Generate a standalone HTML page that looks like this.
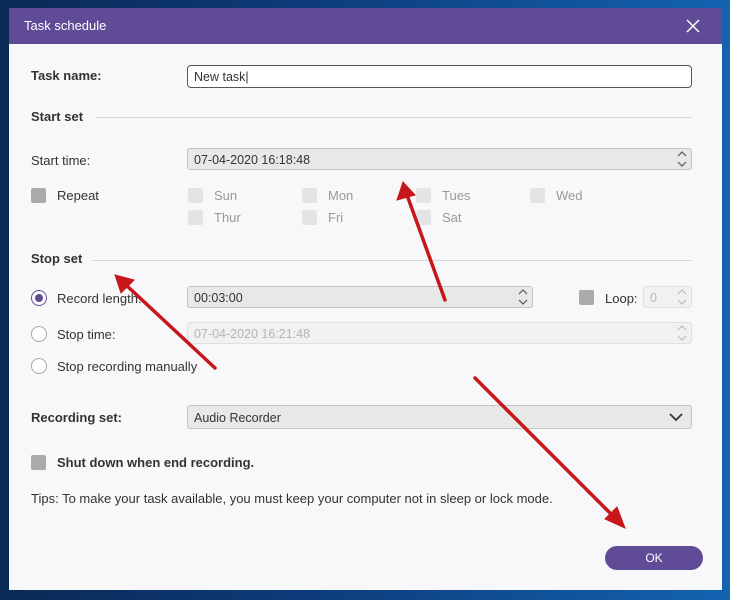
<!DOCTYPE html>
<html><head><style>
body{margin:0;width:730px;height:600px;overflow:hidden;background:linear-gradient(90deg,#0a2a55,#0d3a78 40%,#1363b0 100%);font-family:"Liberation Sans",sans-serif;position:relative}
.a{position:absolute}
#dlg{left:9px;top:8px;width:713px;height:582px;background:#f8f8fa}
#tb{left:9px;top:8px;width:713px;height:36px;background:#5f4b96;color:#fff;font-size:13px;line-height:36px}
.t{font-size:13px;color:#333}
.b{font-weight:bold}
.box{border:1px solid #c4c4c4;background:#e8e8e8;border-radius:3px;height:22px;font-size:12.5px;line-height:22px;padding-left:6px;color:#333;box-sizing:border-box}
.dis{background:#f1f1f3;color:#b5b5b5;border-color:#e0e0e0}
.cb{width:15px;height:15px;background:#aaa;border-radius:2px}
.cbl{width:15px;height:15px;background:#e4e4e6;border-radius:2px}
.g{color:#999;font-size:13px}
.line{height:1px;background:#d8d8d8}
.r{width:14px;height:14px;border:1px solid #aaa;border-radius:50%;background:#fff}
</style></head><body>
<div id="dlg" class="a"></div>
<div id="tb" class="a"><span style="margin-left:15px">Task schedule</span>
<svg class="a" style="left:677px;top:11px" width="14" height="14"><path d="M1 1L13 13M13 1L1 13" stroke="#fff" stroke-width="1.5"/></svg></div>

<svg width="0" height="0" style="position:absolute"><defs><g id="sp"><path d="M1 5L5 1L9 5M1 11L5 15L9 11" fill="none" stroke-width="1.2"/></g></defs></svg>

<div class="a t b" style="left:31px;top:68px">Task name:</div>
<div class="a box" style="left:187px;top:65px;width:505px;height:23px;background:#fff;border-color:#555;border-radius:4px">New task|</div>

<div class="a t b" style="left:31px;top:109px">Start set</div>
<div class="a line" style="left:96px;top:117px;width:596px"></div>
<div class="a t" style="left:31px;top:153px">Start time:</div>
<div class="a box" style="left:187px;top:148px;width:505px">07-04-2020 16:18:48</div>
<svg class="a" style="left:677px;top:151px" width="10" height="16"><use href="#sp" stroke="#555"/></svg>

<div class="a cb" style="left:31px;top:188px"></div><div class="a t" style="left:57px;top:188px">Repeat</div>
<div class="a cbl" style="left:188px;top:188px"></div><div class="a g" style="left:214px;top:188px">Sun</div>
<div class="a cbl" style="left:302px;top:188px"></div><div class="a g" style="left:328px;top:188px">Mon</div>
<div class="a cbl" style="left:416px;top:188px"></div><div class="a g" style="left:442px;top:188px">Tues</div>
<div class="a cbl" style="left:530px;top:188px"></div><div class="a g" style="left:556px;top:188px">Wed</div>
<div class="a cbl" style="left:188px;top:210px"></div><div class="a g" style="left:214px;top:210px">Thur</div>
<div class="a cbl" style="left:302px;top:210px"></div><div class="a g" style="left:328px;top:210px">Fri</div>
<div class="a cbl" style="left:416px;top:210px"></div><div class="a g" style="left:442px;top:210px">Sat</div>

<div class="a t b" style="left:31px;top:251px">Stop set</div>
<div class="a line" style="left:92px;top:260px;width:600px"></div>

<div class="a r" style="left:31px;top:290px;border-color:#5f4b96"><div style="margin:3px;width:8px;height:8px;border-radius:50%;background:#5f4b96"></div></div>
<div class="a t" style="left:57px;top:291px">Record length:</div>
<div class="a box" style="left:187px;top:286px;width:346px">00:03:00</div>
<svg class="a" style="left:518px;top:289px" width="10" height="16"><use href="#sp" stroke="#555"/></svg>
<div class="a cb" style="left:579px;top:290px"></div><div class="a t" style="left:605px;top:291px">Loop:</div>
<div class="a box dis" style="left:643px;top:286px;width:49px">0</div>
<svg class="a" style="left:677px;top:289px" width="10" height="16"><use href="#sp" stroke="#bbb"/></svg>

<div class="a r" style="left:31px;top:326px"></div>
<div class="a t" style="left:57px;top:327px">Stop time:</div>
<div class="a box dis" style="left:187px;top:322px;width:505px">07-04-2020 16:21:48</div>
<svg class="a" style="left:677px;top:325px" width="10" height="16"><use href="#sp" stroke="#bbb"/></svg>

<div class="a r" style="left:31px;top:358px"></div>
<div class="a t" style="left:57px;top:359px">Stop recording manually</div>

<div class="a t b" style="left:31px;top:410px">Recording set:</div>
<div class="a box" style="left:187px;top:405px;width:505px;height:24px;line-height:24px">Audio Recorder</div>
<svg class="a" style="left:669px;top:412px" width="14" height="10"><path d="M1 2L7 8L13 2" stroke="#333" stroke-width="1.8" fill="none"/></svg>

<div class="a cb" style="left:31px;top:455px"></div>
<div class="a t b" style="left:57px;top:455px">Shut down when end recording.</div>
<div class="a t" style="left:31px;top:491px">Tips: To make your task available, you must keep your computer not in sleep or lock mode.</div>

<div class="a" style="left:605px;top:546px;width:98px;height:24px;border-radius:12px;background:#5f4b96;color:#fff;font-size:12px;line-height:24px;text-align:center">OK</div>

<svg class="a" style="left:0;top:0" width="730" height="600">
<g stroke="#c8171b" stroke-width="3.5" fill="#c8171b" stroke-linecap="round">
<line x1="445" y1="300" x2="407" y2="195"/><polygon points="403,182 397,200 415,195" stroke-width="1"/>
<line x1="215" y1="368" x2="125" y2="284"/><polygon points="115,275 121,293 134,280" stroke-width="1"/>
<line x1="475" y1="378" x2="615" y2="518"/><polygon points="625,528 605,519 617,507" stroke-width="1"/>
</g></svg>
</body></html>
